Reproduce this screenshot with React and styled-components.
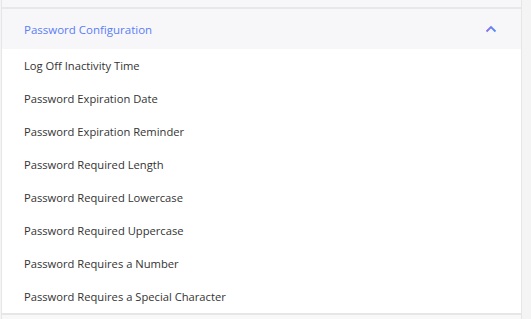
import React from "react";
import styled, { createGlobalStyle } from "styled-components";

const Global = createGlobalStyle`
  html, body { margin: 0; padding: 0; background: #f4f4f4; }
  body { font-family: "Open Sans", "Noto Sans", sans-serif; }
`;

const Panel = styled.div`
  width: 519px;
  margin-left: 1px;
  height: 319px;
  border-left: 1px solid #e6e6e6;
  border-right: 1px solid #e6e6e6;
  background: #f7f7f9;
  display: flex;
  flex-direction: column;
  overflow: hidden;
`;

const PrevItem = styled.div`
  height: 7px;
  background: #f7f7f9;
  border-bottom: 2px solid #e8e8ea;
  flex-shrink: 0;
`;

const Header = styled.div`
  height: 40px;
  flex-shrink: 0;
  display: flex;
  align-items: center;
  justify-content: space-between;
  padding: 0 24px 0 22px;
  background: #f7f7fa;
  color: #5b7df6;
  font-size: 11.5px;
`;

const Body = styled.div`
  background: #fff;
  border-bottom: 2px solid #e6e6e6;
  flex-shrink: 0;
`;

const Row = styled.div`
  height: 33px;
  display: flex;
  align-items: center;
  padding-left: 22px;
  font-size: 11.2px;
  color: #333;
`;

const NextItem = styled.div`
  flex: 1;
  background: #f8f8f8;
`;

const items = [
  "Log Off Inactivity Time",
  "Password Expiration Date",
  "Password Expiration Reminder",
  "Password Required Length",
  "Password Required Lowercase",
  "Password Required Uppercase",
  "Password Requires a Number",
  "Password Requires a Special Character",
];

const Chevron = () => (
  <svg width="12" height="8" viewBox="0 0 12 8">
    <defs>
      <linearGradient id="cg" x1="0" x2="1" y1="0" y2="0">
        <stop offset="0" stopColor="#8a6cf0" />
        <stop offset="1" stopColor="#4f8cf7" />
      </linearGradient>
    </defs>
    <path d="M1.5 6.5 L6 2 L10.5 6.5" fill="none" stroke="url(#cg)" strokeWidth="1.8" />
  </svg>
);

export default function App() {
  return (
    <>
      <Global />
      <Panel>
        <PrevItem />
        <Header>
          <span>Password Configuration</span>
          <Chevron />
        </Header>
        <Body>
          {items.map((t) => (
            <Row key={t}>{t}</Row>
          ))}
        </Body>
        <NextItem />
      </Panel>
    </>
  );
}
